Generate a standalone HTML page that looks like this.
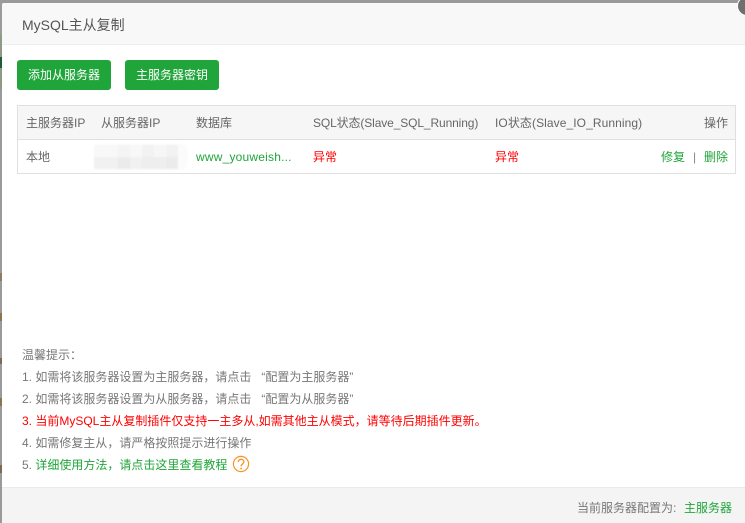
<!DOCTYPE html>
<html lang="zh">
<head>
<meta charset="utf-8">
<style>
html,body{margin:0;padding:0;width:745px;height:523px;overflow:hidden;background:#9a9a9a}
body{position:relative;font-family:"Liberation Sans","Noto Sans CJK SC",sans-serif;font-size:12px;color:#666}
.a{position:absolute;white-space:nowrap}
#side div{position:absolute;left:0;width:2px}
#modal{position:absolute;left:2px;top:3px;width:743px;height:520px;background:#fff;border-radius:2px 0 0 0;overflow:hidden}
#head{position:absolute;left:0;top:0;width:743px;height:41px;background:#f8f8f8;border-bottom:1px solid #eee}
#foot{position:absolute;left:0;top:484px;width:743px;height:36px;background:#f5f4f5;border-top:1px solid #eaeaea}
.btn{position:absolute;top:60px;height:30px;line-height:30px;background:#20a53a;color:#fff;text-align:center;border-radius:3px;font-size:12px;width:94px}
#tb{position:absolute;left:17px;top:105px;width:717px;height:67px;border:1px solid #e0e0e0;background:#fff}
#th{position:absolute;left:0;top:0;width:717px;height:33px;background:#f6f6f6;border-bottom:1px solid #e0e0e0}
.t{position:absolute;line-height:16px;white-space:nowrap;font-size:12px}
.tip{left:22px;line-height:16px;font-size:12px;color:#777}
.q{margin-left:10px}
</style>
</head>
<body>
<div id="side">
<div style="top:0;height:35px;background:#9b9b9b"></div>
<div style="top:35px;height:54px;background:#8e9a84"></div>
<div style="top:57px;height:11px;background:#1f5c3a"></div>
<div style="top:273px;height:8px;background:#8d7c62"></div>
<div style="top:313px;height:8px;background:#8d7350"></div>
<div style="top:358px;height:6px;background:#7a6a58"></div>
<div style="top:398px;height:8px;background:#8d7350"></div>
<div style="top:465px;height:8px;background:#7d6a50"></div>
</div>
<div id="modal">
<div id="head"></div>
<div id="foot"></div>
</div>
<div class="a" style="left:22px;top:15px;font-size:14px;line-height:20px;color:#555">MySQL主从复制</div>
<div class="btn" style="left:17px">添加从服务器</div>
<div class="btn" style="left:125px">主服务器密钥</div>
<div id="tb">
<div id="th"></div>
<div class="t" style="left:8px;top:9px">主服务器IP</div>
<div class="t" style="left:83px;top:9px">从服务器IP</div>
<div class="t" style="left:178px;top:9px">数据库</div>
<div class="t" style="left:295px;top:9px;letter-spacing:-.12px">SQL状态(Slave_SQL_Running)</div>
<div class="t" style="left:477px;top:9px;letter-spacing:.08px">IO状态(Slave_IO_Running)</div>
<div class="t" style="left:686px;top:9px">操作</div>
<div class="t" style="left:8px;top:43px">本地</div>
<div class="t" style="left:178px;top:43px;color:#20a53a;letter-spacing:.2px">www_youweish...</div>
<div class="t" style="left:295px;top:43px;color:#f00">异常</div>
<div class="t" style="left:477px;top:43px;color:#f00">异常</div>
<div class="t" style="left:643px;top:43px;color:#20a53a">修复</div>
<div class="t" style="left:675px;top:43px;color:#888">|</div>
<div class="t" style="left:686px;top:43px;color:#20a53a">删除</div>
</div>
<svg class="a" style="left:90px;top:142px" width="105" height="30" viewBox="0 0 105 30">
<defs><filter id="b" x="-10%" y="-30%" width="120%" height="160%"><feGaussianBlur stdDeviation=".8"/></filter></defs>
<g filter="url(#b)">
<rect x="4" y="2" width="94" height="26" rx="8" fill="#fbfbfb"/>
<rect x="4" y="3" width="84" height="12" fill="#f8f8f8"/>
<rect x="4" y="15" width="84" height="12" fill="#f1f1f1"/>
<rect x="28" y="3" width="12" height="12" fill="#f4f4f4"/>
<rect x="28" y="15" width="12" height="12" fill="#ebebeb"/>
<rect x="52" y="3" width="12" height="12" fill="#f2f2f2"/>
<rect x="52" y="15" width="24" height="12" fill="#eeeeee"/>
<rect x="64" y="3" width="12" height="12" fill="#f6f6f6"/>
<rect x="76" y="3" width="12" height="12" fill="#f2f2f2"/>
<rect x="76" y="15" width="12" height="12" fill="#ebebeb"/>
</g>
</svg>
<div class="a tip" style="top:347px">温馨提示：</div>
<div class="a tip" style="top:369px">1. 如需将该服务器设置为主服务器，请点击<span class="q">“配置为主服务器”</span></div>
<div class="a tip" style="top:391px">2. 如需将该服务器设置为从服务器，请点击<span class="q">“配置为从服务器”</span></div>
<div class="a tip" style="top:413px;color:#f00">3. 当前MySQL主从复制插件仅支持一主多从,如需其他主从模式，请等待后期插件更新。</div>
<div class="a tip" style="top:435px">4. 如需修复主从，请严格按照提示进行操作</div>
<div class="a tip" style="top:457px">5. <span style="color:#20a53a">详细使用方法，请点击这里查看教程</span></div>
<svg class="a" style="left:232px;top:455px" width="18" height="18" viewBox="0 0 18 18">
<circle cx="9" cy="9" r="7.6" fill="none" stroke="#f7941d" stroke-width="1.2"/>
<path d="M6.2 7.1C6.3 5.3 7.6 4.3 9.1 4.3c1.6 0 2.8 1.1 2.8 2.5 0 1.2-.7 1.7-1.5 2.3-.9.6-1.3 1.1-1.3 2.3" fill="none" stroke="#f7941d" stroke-width="1.3"/>
<circle cx="9.05" cy="13.5" r=".9" fill="#f7941d"/>
</svg>
<div class="a" style="left:577px;top:500px;line-height:16px;font-size:12px;color:#777">当前服务器配置为:</div>
<div class="a" style="left:684px;top:500px;line-height:16px;font-size:12px;color:#20a53a">主服务器</div>
<div class="a" style="left:738px;top:-3px;width:18px;height:18px;border-radius:50%;background:#6f6f6f;box-shadow:0 0 0 1px #fff"></div>
</body>
</html>
